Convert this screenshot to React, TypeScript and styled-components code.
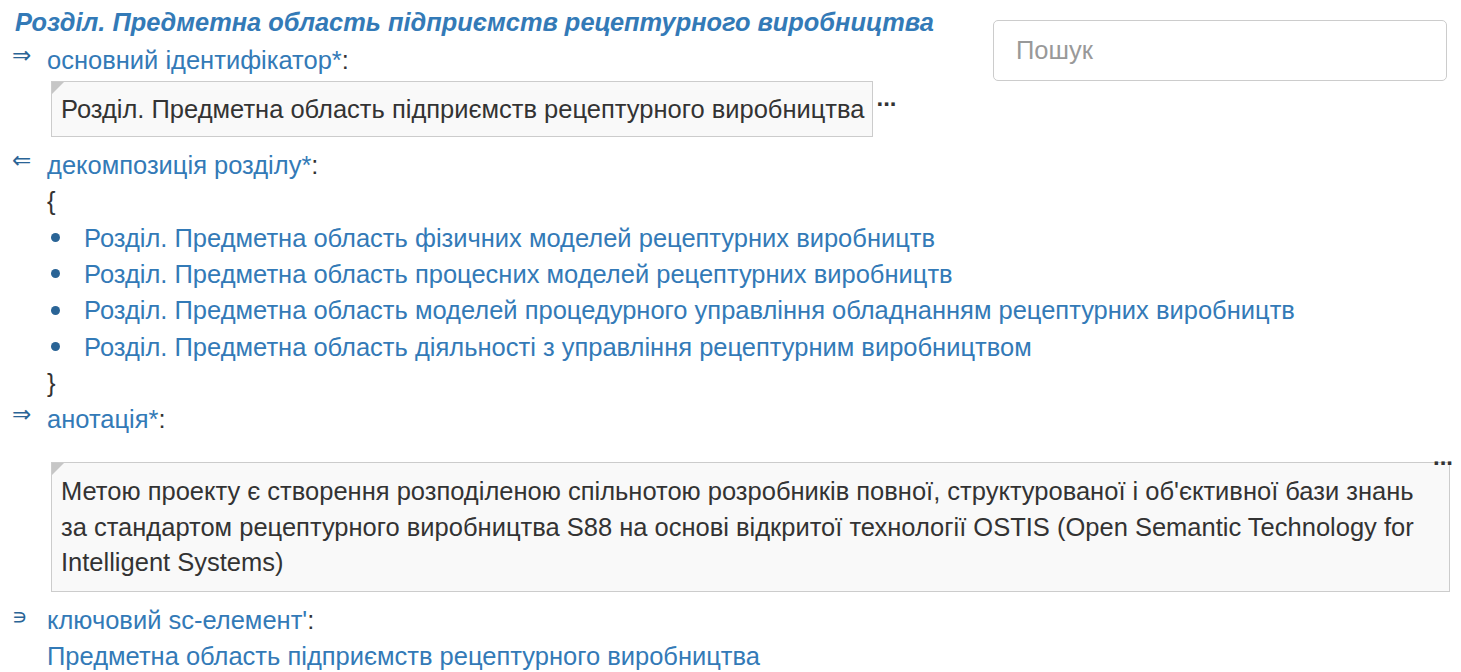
import React from "react";
import styled, { createGlobalStyle } from "styled-components";

const Global = createGlobalStyle`
  html, body { margin: 0; padding: 0; background: #fff; }
  body { font-family: "Liberation Sans", Arial, sans-serif; }
`;

const Page = styled.div`
  padding: 4px 11px 0 12px;
  font-family: "Liberation Sans", Arial, sans-serif;
  font-size: 25.5px;
  line-height: 36px;
  color: #333;
`;

const SearchInput = styled.input`
  float: right;
  box-sizing: border-box;
  width: 454px;
  height: 61px;
  margin: 16px 3px 0 0;
  padding: 0 22px;
  border: 1px solid #ccc;
  border-radius: 5px;
  font-family: "Liberation Sans", Arial, sans-serif;
  font-size: 25.5px;
  color: #555;
  background: #fff;
  outline: none;
  &::placeholder { color: #999; }
`;

const Title = styled.div`
  margin-left: 3px;
  font-size: 25.4px;
  font-weight: bold;
  font-style: italic;
  color: #337ab7;
  height: 38px;
`;

const Header = styled.div`
  display: flex;
  align-items: flex-start;
  height: 36px;
`;

const Arrow = styled.span`
  width: 35px;
  flex-shrink: 0;
  font-family: "DejaVu Sans", sans-serif;
  font-size: 23px;
  line-height: 26px;
  color: #2a6496;
`;

const Member = styled(Arrow)`
  font-size: 22px;
  line-height: 30px;
`;

const Label = styled.span`
  color: #337ab7;
`;

const Colon = styled.span`
  color: #333;
`;

const Body = styled.div`
  margin-left: 35px;
`;

const ContentBox = styled.div<{ $full?: boolean }>`
  position: relative;
  display: ${(p) => (p.$full ? "block" : "inline-block")};
  margin-left: 4px;
  padding: ${(p) => (p.$full ? "11px 9px 10px 9px" : "9px 8px 9px 9px")};
  line-height: ${(p) => (p.$full ? "35.5px" : "36px")};
  border: 1px solid #ccc;
  background: #f9f9f9;
  color: #333;
  &::before {
    content: "";
    position: absolute;
    left: 0;
    top: 0;
    width: 0;
    height: 0;
    border-top: 12px solid #c6c6c6;
    border-right: 12px solid transparent;
  }
`;

const Ellipsis = styled.span<{ $offset?: number }>`
  display: inline-block;
  margin-left: 3px;
  margin-top: ${(p) => p.$offset ?? 0}px;
  vertical-align: top;
  font-size: 24px;
  font-weight: bold;
  line-height: 16px;
  color: #333;
`;

const InlineRow = styled.div`
  display: flex;
  align-items: flex-start;
  margin-top: 3px;
`;

const TopEllipsisRow = styled.div`
  position: relative;
  z-index: 1;
  display: flex;
  justify-content: flex-end;
  align-items: flex-end;
  height: 25px;
  margin-right: -3px;
  & > span { line-height: 12px; margin-bottom: -1px; }
`;

const Gap = styled.div<{ $h: number }>`
  height: ${(p) => p.$h}px;
`;

const Brace = styled.div`
  line-height: 36.4px;
  color: #333;
`;

const List = styled.ul`
  list-style: none;
  margin: 0;
  padding: 0;
`;

const Item = styled.li`
  display: flex;
  align-items: center;
  height: 36.4px;
  color: #337ab7;
  &::before {
    content: "";
    width: 9px;
    height: 9px;
    border-radius: 50%;
    background: #2a6496;
    margin: 0 24px 0 4px;
    flex-shrink: 0;
  }
`;

const LinkLine = styled.div`
  color: #337ab7;
`;

const items = [
  "Розділ. Предметна область фізичних моделей рецептурних виробництв",
  "Розділ. Предметна область процесних моделей рецептурних виробництв",
  "Розділ. Предметна область моделей процедурного управління обладнанням рецептурних виробництв",
  "Розділ. Предметна область діяльності з управління рецептурним виробництвом",
];

export default function App() {
  return (
    <Page>
      <Global />
      <SearchInput placeholder="Пошук" />
      <Title>Розділ. Предметна область підприємств рецептурного виробництва</Title>

      <Header>
        <Arrow>⇒</Arrow>
        <span>
          <Label>основний ідентифікатор*</Label>
          <Colon>:</Colon>
        </span>
      </Header>
      <Body>
        <InlineRow>
          <ContentBox>Розділ. Предметна область підприємств рецептурного виробництва</ContentBox>
          <Ellipsis $offset={9}>...</Ellipsis>
        </InlineRow>
      </Body>

      <Gap $h={10} />
      <Header>
        <Arrow>⇐</Arrow>
        <span>
          <Label>декомпозиція розділу*</Label>
          <Colon>:</Colon>
        </span>
      </Header>
      <Body>
        <Brace>{"{"}</Brace>
        <List>
          {items.map((t) => (
            <Item key={t}>{t}</Item>
          ))}
        </List>
        <Brace>{"}"}</Brace>
      </Body>

      <Header>
        <Arrow>⇒</Arrow>
        <span>
          <Label>анотація*</Label>
          <Colon>:</Colon>
        </span>
      </Header>
      <Body>
        <TopEllipsisRow>
          <Ellipsis>...</Ellipsis>
        </TopEllipsisRow>
        <ContentBox $full>
          Метою проекту є створення розподіленою спільнотою розробників повної, структурованої і об'єктивної бази знань за
          стандартом рецептурного виробництва S88 на основі відкритої технології OSTIS (Open Semantic Technology for
          Intelligent Systems)
        </ContentBox>
      </Body>

      <Gap $h={10} />
      <Header>
        <Member>∍</Member>
        <span>
          <Label>ключовий sc-елемент'</Label>
          <Colon>:</Colon>
        </span>
      </Header>
      <Body>
        <LinkLine>Предметна область підприємств рецептурного виробництва</LinkLine>
      </Body>
    </Page>
  );
}
